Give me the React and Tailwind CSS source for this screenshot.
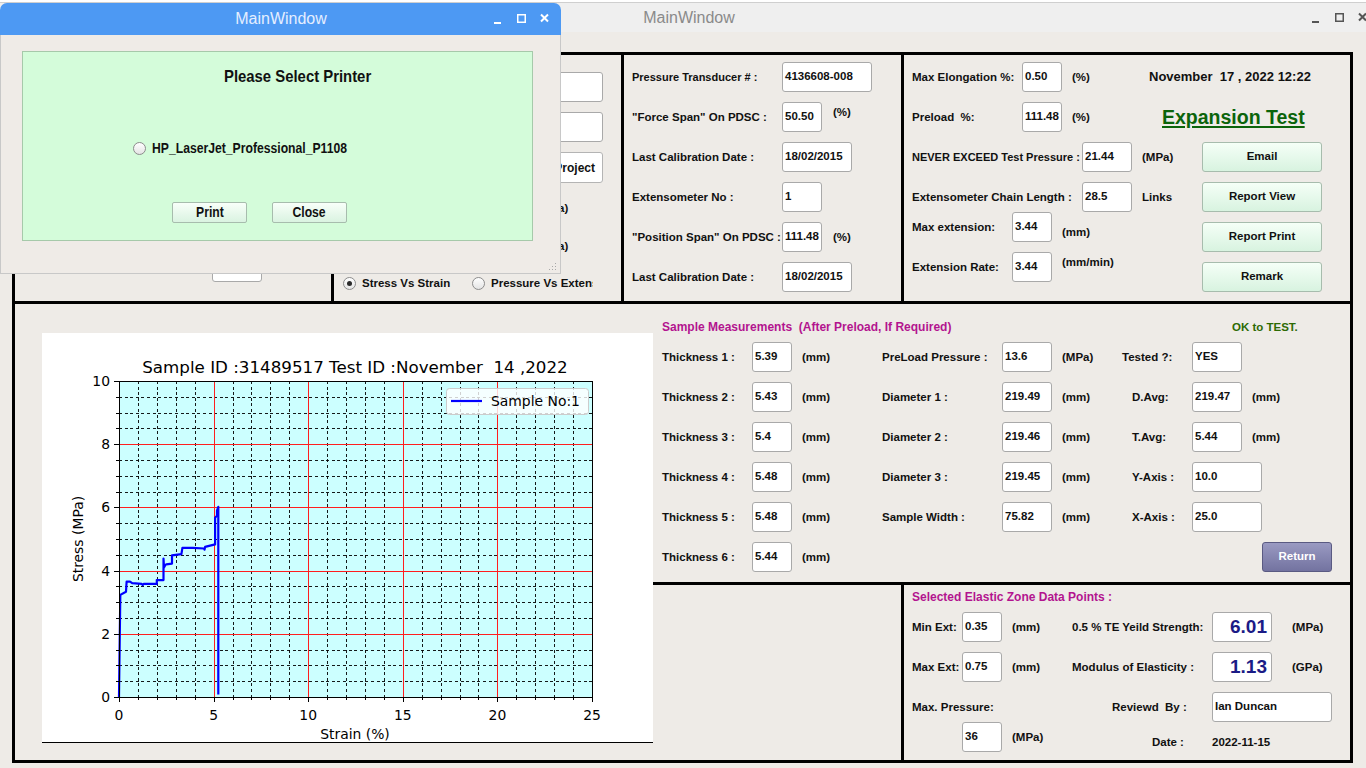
import React from "react";

const LBL = "text-[11.5px] font-bold text-[#111] whitespace-pre leading-[13px] shrink-0";

function Inp({ w, v, extra = "" }) {
  return (
    <div
      className={`h-[30px] ${w} shrink-0 bg-white border border-[#a9a9a9] rounded-[3px] flex items-center pl-[2px] text-[11.5px] font-bold text-[#111] whitespace-nowrap overflow-hidden ${extra}`}
    >
      {v}
    </div>
  );
}

function GBtn({ w, h = "h-[30px]", children }) {
  return (
    <div
      className={`${w} ${h} shrink-0 flex items-center justify-center rounded-[3px] border border-[#a7bcad] bg-linear-to-b from-[#f5fff7] to-[#d8f3e0] text-[11.5px] font-bold text-[#111]`}
    >
      {children}
    </div>
  );
}

function Radio({ checked }) {
  return (
    <span className="w-[13px] h-[13px] rounded-full border border-[#8c8c8c] bg-linear-to-b from-[#ffffff] to-[#e4e4e4] flex items-center justify-center shrink-0">
      {checked && <span className="w-[5px] h-[5px] rounded-full bg-[#2a2a2a]" />}
    </span>
  );
}

function WinCtl({ color }) {
  return (
    <svg width="58" height="12" viewBox="0 0 58 12" className="block">
      <rect x="0" y="9" width="7" height="2" fill={color} />
      <rect x="23.75" y="1.75" width="7.5" height="7.5" fill="none" stroke={color} strokeWidth="1.5" />
      <path d="M47 1.5 L54 8.5 M54 1.5 L47 8.5" stroke={color} strokeWidth="2" />
    </svg>
  );
}

function Chart() {
  const X0 = 77, X1 = 550, Y0 = 48, Y1 = 364;
  const sx = (X1 - X0) / 25;
  const sy = (Y1 - Y0) / 10;
  const px = (d) => X0 + d * sx;
  const py = (d) => Y1 - d * sy;
  const c = (v) => Math.round(v) + 0.5;
  const minorX = [], majorX = [];
  for (let i = 1; i < 25; i++) (i % 5 === 0 ? majorX : minorX).push(c(px(i)));
  const minorY = [], majorY = [];
  for (let j = 1; j < 20; j++) {
    const v = j * 0.5;
    (v % 2 === 0 ? majorY : minorY).push(c(py(v)));
  }
  const data = [
    [0, 0], [0.07, 3.23], [0.37, 3.33], [0.4, 3.65], [0.58, 3.65], [0.7, 3.6],
    [1.2, 3.58], [1.25, 3.54], [1.3, 3.58], [2.0, 3.58], [2.0, 3.7], [2.35, 3.7],
    [2.35, 4.38], [2.38, 4.1], [2.45, 4.18], [2.5, 4.2], [2.8, 4.22], [2.8, 4.48],
    [3.0, 4.5], [3.3, 4.52], [3.35, 4.72], [3.9, 4.72], [4.5, 4.7], [4.52, 4.66],
    [4.55, 4.75], [5.08, 4.83], [5.08, 5.67], [5.18, 5.74], [5.18, 5.9], [5.25, 6.02],
    [5.25, 0.08],
  ];
  const pts = data.map(([a, b]) => `${px(a).toFixed(1)},${py(b).toFixed(1)}`).join(" ");
  const ticksX = [];
  for (let i = 0; i <= 25; i++) ticksX.push(i);
  const ticksY = [];
  for (let j = 0; j <= 20; j++) ticksY.push(j * 0.5);
  const font = "DejaVu Sans, sans-serif";
  return (
    <svg width="611" height="409" viewBox="0 0 611 409" className="block">
      <text x="313" y="40" textAnchor="middle" fontSize="16.7" fontFamily={font} fill="#000" xmlSpace="preserve" className="whitespace-pre">
        Sample ID :31489517 Test ID :November  14 ,2022
      </text>
      <rect x={X0} y={Y0} width={X1 - X0} height={Y1 - Y0} fill="#ccffff" />
      <g shapeRendering="crispEdges">
        {minorX.map((x) => (
          <line key={"mx" + x} x1={x} x2={x} y1={Y0} y2={Y1} stroke="#000" strokeWidth="0.9" strokeDasharray="3 2.6" />
        ))}
        {minorY.map((y) => (
          <line key={"my" + y} x1={X0} x2={X1} y1={y} y2={y} stroke="#000" strokeWidth="0.9" strokeDasharray="3 2.6" />
        ))}
        {majorX.map((x) => (
          <line key={"Mx" + x} x1={x} x2={x} y1={Y0} y2={Y1} stroke="#ff1e1e" strokeWidth="1" />
        ))}
        {majorY.map((y) => (
          <line key={"My" + y} x1={X0} x2={X1} y1={y} y2={y} stroke="#ff1e1e" strokeWidth="1" />
        ))}
      </g>
      <polyline points={pts} fill="none" stroke="#0000ff" strokeWidth="2.2" strokeLinejoin="round" />
      <g shapeRendering="crispEdges">
        <rect x={X0 + 0.5} y={Y0 + 0.5} width={X1 - X0} height={Y1 - Y0} fill="none" stroke="#000" strokeWidth="1" />
        {ticksX.map((i) => (
          <line key={"tx" + i} x1={c(px(i))} x2={c(px(i))} y1={Y1} y2={Y1 + (i % 5 === 0 ? 5 : 3)} stroke="#000" strokeWidth="1" />
        ))}
        {ticksY.map((v) => (
          <line key={"ty" + v} x1={X0 - (v % 2 === 0 ? 5 : 3)} x2={X0} y1={c(py(v))} y2={c(py(v))} stroke="#000" strokeWidth="1" />
        ))}
      </g>
      {[0, 5, 10, 15, 20, 25].map((i) => (
        <text key={"lx" + i} x={px(i)} y="387" textAnchor="middle" fontSize="13.9" fontFamily={font} fill="#000">
          {i}
        </text>
      ))}
      {[0, 2, 4, 6, 8, 10].map((v) => (
        <text key={"ly" + v} x="68" y={py(v) + 5} textAnchor="end" fontSize="13.9" fontFamily={font} fill="#000">
          {v}
        </text>
      ))}
      <text x="313" y="406" textAnchor="middle" fontSize="13.9" fontFamily={font} fill="#000">
        Strain (%)
      </text>
      <text x="41" y="206" textAnchor="middle" fontSize="13.9" fontFamily={font} fill="#000" transform="rotate(-90 41 206)">
        Stress (MPa)
      </text>
      <rect x="404.5" y="55.5" width="142" height="26" rx="3" fill="#ffffff" fillOpacity="0.8" stroke="#cccccc" />
      <line x1="409" x2="440" y1="68" y2="68" stroke="#0000ff" strokeWidth="2.2" />
      <text x="449" y="73" fontSize="13.9" fontFamily={font} fill="#000">
        Sample No:1
      </text>
    </svg>
  );
}

function Panel1() {
  return (
    <div className="w-[319px] shrink-0 border-r-[3px] border-black flex flex-col pl-[10px]">
      <div className="mt-[7px] h-[30px] flex items-center">
        <div className="w-[100px] shrink-0" />
        <Inp w="w-[190px]" v="" />
      </div>
      <div className="mt-[10px] h-[30px] flex items-center">
        <div className="w-[100px] shrink-0" />
        <Inp w="w-[190px]" v="" />
      </div>
      <div className="mt-[10px] h-[30px] flex items-center">
        <div className="w-[100px] shrink-0" />
        <Inp w="w-[190px]" v="" />
      </div>
      <div className="mt-[10px] h-[30px] flex items-center">
        <div className="w-[100px] shrink-0" />
        <Inp w="w-[190px]" v="" />
      </div>
      <div className="mt-[40px] h-[30px] flex items-center">
        <div className="w-[187px] shrink-0" />
        <Inp w="w-[50px]" v="" />
      </div>
    </div>
  );
}

function Panel2() {
  return (
    <div className="w-[290px] shrink-0 border-r-[3px] border-black flex flex-col">
      <div className="mt-[17px] h-[30px] flex items-center pl-[10px]">
        <div className="w-[104px] shrink-0" />
        <Inp w="w-[155px]" v="" />
      </div>
      <div className="mt-[10px] h-[30px] flex items-center pl-[10px]">
        <div className="w-[104px] shrink-0" />
        <Inp w="w-[155px]" v="" />
      </div>
      <div className="mt-[10px] h-[31px] flex justify-end pr-[18px]">
        <div className="w-[94px] h-[31px] shrink-0 flex items-center justify-end pr-[7px] rounded-[3px] border border-[#b4b4b4] bg-white text-[12px] font-bold text-[#111] whitespace-nowrap">
          Select Project
        </div>
      </div>
      <div className="mt-[10px] h-[30px] flex items-center pl-[10px]">
        <div className="w-[121px] shrink-0" />
        <Inp w="w-[60px]" v="" />
        <div className={`${LBL} ml-[12px]`}>(MPa)</div>
      </div>
      <div className="mt-[8px] h-[30px] flex items-center pl-[10px]">
        <div className="w-[121px] shrink-0" />
        <Inp w="w-[60px]" v="" />
        <div className={`${LBL} ml-[12px]`}>(MPa)</div>
      </div>
      <div className="mt-[14px] h-[16px] flex items-center pl-[9px]">
        <div className="w-[129px] flex items-center gap-[6px] shrink-0">
          <Radio checked />
          <span className={LBL}>Stress Vs Strain</span>
        </div>
        <div className="w-[121px] flex items-center gap-[6px] overflow-hidden shrink-0">
          <Radio />
          <span className={LBL}>Pressure Vs Extension</span>
        </div>
      </div>
    </div>
  );
}

function Panel3() {
  return (
    <div className="w-[280px] shrink-0 border-r-[3px] border-black flex flex-col pl-[8px] pt-[7px]">
      <div className="h-[30px] flex items-center">
        <div className={`${LBL} w-[150px] text-[11px]`}>Pressure Transducer # :</div>
        <Inp w="w-[90px]" v="4136608-008" />
      </div>
      <div className="mt-[10px] h-[30px] flex items-center">
        <div className={`${LBL} w-[150px]`}>"Force Span" On PDSC :</div>
        <Inp w="w-[40px]" v="50.50" />
        <div className={`${LBL} ml-[11px] self-start mt-[4px]`}>(%)</div>
      </div>
      <div className="mt-[10px] h-[30px] flex items-center">
        <div className={`${LBL} w-[150px]`}>Last Calibration Date :</div>
        <Inp w="w-[70px]" v="18/02/2015" />
      </div>
      <div className="mt-[10px] h-[30px] flex items-center">
        <div className={`${LBL} w-[150px]`}>Extensometer No :</div>
        <Inp w="w-[40px]" v="1" />
      </div>
      <div className="mt-[10px] h-[30px] flex items-center">
        <div className={`${LBL} w-[150px]`}>"Position Span" On PDSC :</div>
        <Inp w="w-[40px]" v="111.48" />
        <div className={`${LBL} ml-[11px]`}>(%)</div>
      </div>
      <div className="mt-[10px] h-[30px] flex items-center">
        <div className={`${LBL} w-[150px]`}>Last Calibration Date :</div>
        <Inp w="w-[70px]" v="18/02/2015" />
      </div>
    </div>
  );
}

function Panel4() {
  return (
    <div className="flex-1 flex flex-col pl-[8px] pt-[7px]">
      <div className="h-[30px] flex items-center">
        <div className={`${LBL} w-[110px]`}>Max Elongation %:</div>
        <Inp w="w-[40px]" v="0.50" />
        <div className={`${LBL} ml-[10px] w-[77px]`}>(%)</div>
        <div className="text-[13px] font-bold whitespace-pre text-[#111]">November  17 , 2022 12:22</div>
      </div>
      <div className="mt-[10px] h-[30px] flex items-center">
        <div className={`${LBL} w-[110px]`}>Preload  %:</div>
        <Inp w="w-[40px]" v="111.48" />
        <div className={`${LBL} ml-[10px] w-[90px]`}>(%)</div>
        <div className="text-[19.5px] leading-[22px] font-bold text-[#0b640b] underline decoration-2 underline-offset-[2px] whitespace-nowrap">
          Expansion Test
        </div>
      </div>
      <div className="mt-[10px] flex">
        <div className="w-[290px] shrink-0 flex flex-col">
          <div className="h-[30px] flex items-center">
            <div className={`${LBL} w-[170px] text-[11px]`}>NEVER EXCEED Test Pressure :</div>
            <Inp w="w-[50px]" v="21.44" />
            <div className={`${LBL} ml-[10px]`}>(MPa)</div>
          </div>
          <div className="mt-[10px] h-[30px] flex items-center">
            <div className={`${LBL} w-[170px]`}>Extensometer Chain Length :</div>
            <Inp w="w-[50px]" v="28.5" />
            <div className={`${LBL} ml-[10px]`}>Links</div>
          </div>
          <div className="h-[30px] flex items-center">
            <div className={`${LBL} w-[100px]`}>Max extension:</div>
            <Inp w="w-[40px]" v="3.44" />
            <div className={`${LBL} ml-[10px] self-start mt-[14px]`}>(mm)</div>
          </div>
          <div className="mt-[10px] h-[30px] flex items-center">
            <div className={`${LBL} w-[100px]`}>Extension Rate:</div>
            <Inp w="w-[40px]" v="3.44" />
            <div className={`${LBL} ml-[10px] self-start mt-[4px]`}>(mm/min)</div>
          </div>
        </div>
        <div className="flex flex-col gap-[10px]">
          <GBtn w="w-[120px]">Email</GBtn>
          <GBtn w="w-[120px]">Report View</GBtn>
          <GBtn w="w-[120px]">Report Print</GBtn>
          <GBtn w="w-[120px]">Remark</GBtn>
        </div>
      </div>
    </div>
  );
}

const MROWS = [
  { t: "Thickness 1 :", tv: "5.39", l2: "PreLoad Pressure :", v2: "13.6", u2: "(MPa)", l3: "Tested ?:", v3: "YES", u3: "", first: true, wide: false },
  { t: "Thickness 2 :", tv: "5.43", l2: "Diameter 1 :", v2: "219.49", u2: "(mm)", l3: "D.Avg:", v3: "219.47", u3: "(mm)", first: false, wide: false },
  { t: "Thickness 3 :", tv: "5.4", l2: "Diameter 2 :", v2: "219.46", u2: "(mm)", l3: "T.Avg:", v3: "5.44", u3: "(mm)", first: false, wide: false },
  { t: "Thickness 4 :", tv: "5.48", l2: "Diameter 3 :", v2: "219.45", u2: "(mm)", l3: "Y-Axis :", v3: "10.0", u3: "", first: false, wide: true },
  { t: "Thickness 5 :", tv: "5.48", l2: "Sample Width :", v2: "75.82", u2: "(mm)", l3: "X-Axis :", v3: "25.0", u3: "", first: false, wide: true },
];

function Measure() {
  return (
    <div className="h-[281px] shrink-0 border-b-[3px] border-black flex flex-col pl-[9px]">
      <div className="mt-[16px] h-[14px] flex items-center">
        <div className="w-[570px] shrink-0 text-[12px] leading-[14px] font-bold text-[#b3148f] whitespace-pre">
          Sample Measurements  (After Preload, If Required)
        </div>
        <div className="text-[11.5px] leading-[14px] font-bold text-[#2d6a04] whitespace-pre">OK to TEST.</div>
      </div>
      <div className="mt-[8px] flex flex-col gap-[10px]">
        {MROWS.map((r) => (
          <div key={r.t} className="h-[30px] flex items-center">
            <div className={`${LBL} w-[90px]`}>{r.t}</div>
            <Inp w="w-[40px]" v={r.tv} />
            <div className={`${LBL} ml-[10px] w-[80px]`}>(mm)</div>
            <div className={`${LBL} w-[120px]`}>{r.l2}</div>
            <Inp w="w-[50px]" v={r.v2} />
            <div className={`${LBL} ml-[10px] w-[60px]`}>{r.u2}</div>
            <div className={`${LBL} ${r.first ? "w-[70px]" : "w-[60px] ml-[10px]"}`}>{r.l3}</div>
            <Inp w={r.wide ? "w-[70px]" : "w-[50px]"} v={r.v3} />
            {r.u3 && <div className={`${LBL} ml-[10px]`}>{r.u3}</div>}
          </div>
        ))}
        <div className="h-[30px] flex items-center">
          <div className={`${LBL} w-[90px]`}>Thickness 6 :</div>
          <Inp w="w-[40px]" v="5.44" />
          <div className={`${LBL} ml-[10px] w-[80px]`}>(mm)</div>
          <div className="flex-1" />
          <div className="w-[70px] h-[30px] mr-[18px] rounded-[3px] border border-[#5a5a82] bg-linear-to-b from-[#9a9ac2] to-[#7373a0] flex items-center justify-center text-[11.5px] font-bold text-white">
            Return
          </div>
        </div>
      </div>
    </div>
  );
}

function Elastic() {
  return (
    <div className="flex-1 flex flex-col pl-[8px]">
      <div className="mt-[5px] h-[14px] text-[12px] leading-[14px] font-bold text-[#b3148f] whitespace-pre">
        Selected Elastic Zone Data Points :
      </div>
      <div className="mt-[8px] h-[30px] flex items-center">
        <div className={`${LBL} w-[50px]`}>Min Ext:</div>
        <Inp w="w-[40px]" v="0.35" />
        <div className={`${LBL} ml-[10px] w-[60px]`}>(mm)</div>
        <div className={`${LBL} w-[140px]`}>0.5 % TE Yeild Strength:</div>
        <div className="w-[60px] h-[30px] shrink-0 bg-white border border-[#a9a9a9] rounded-[3px] flex items-center justify-end pr-[4px] text-[19px] font-bold text-[#1b1b86]">
          6.01
        </div>
        <div className={`${LBL} ml-[20px]`}>(MPa)</div>
      </div>
      <div className="mt-[10px] h-[30px] flex items-center">
        <div className={`${LBL} w-[50px]`}>Max Ext:</div>
        <Inp w="w-[40px]" v="0.75" />
        <div className={`${LBL} ml-[10px] w-[60px]`}>(mm)</div>
        <div className={`${LBL} w-[140px]`}>Modulus of Elasticity :</div>
        <div className="w-[60px] h-[30px] shrink-0 bg-white border border-[#a9a9a9] rounded-[3px] flex items-center justify-end pr-[4px] text-[19px] font-bold text-[#1b1b86]">
          1.13
        </div>
        <div className={`${LBL} ml-[20px]`}>(GPa)</div>
      </div>
      <div className="mt-[10px] h-[30px] flex items-center">
        <div className={`${LBL} w-[200px]`}>Max. Pressure:</div>
        <div className={`${LBL} w-[100px]`}>Reviewd  By :</div>
        <Inp w="w-[120px]" v="Ian Duncan" />
      </div>
      <div className="h-[30px] flex items-center">
        <div className="w-[50px] shrink-0" />
        <Inp w="w-[40px]" v="36" />
        <div className={`${LBL} ml-[10px] w-[140px]`}>(MPa)</div>
        <div className={`${LBL} w-[60px] self-start mt-[14px]`}>Date :</div>
        <div className={`${LBL} self-start mt-[14px]`}>2022-11-15</div>
      </div>
    </div>
  );
}

function Dialog() {
  return (
    <div className="absolute left-0 top-[3px] w-[561px] flex flex-col">
      <div className="h-[32px] rounded-t-[7px] bg-[#4d99f3] flex items-center">
        <div className="flex-1 flex justify-center pl-[68px] text-[16px] text-[#e4eeff]">MainWindow</div>
        <div className="w-[55px] mr-[12px] shrink-0">
          <WinCtl color="#ffffff" />
        </div>
      </div>
      <div className="h-[239px] bg-[#efebe7] border border-t-0 border-[#c8c8c8] flex flex-col">
        <div className="mt-[16px] ml-[21px] w-[511px] h-[190px] bg-[#d4fcda] border border-[#a6c9aa] flex flex-col">
          <div className="mt-[15px] pl-[201px] h-[20px] flex items-center">
            <span className="inline-block origin-left scale-x-[0.875] text-[17px] leading-[20px] font-bold text-[#111] whitespace-nowrap">
              Please Select Printer
            </span>
          </div>
          <div className="mt-[53px] h-[16px] ml-[110px] flex items-center gap-[6px]">
            <Radio />
            <span className="inline-block origin-left scale-x-[0.87] text-[14px] font-bold text-[#111] whitespace-nowrap">
              HP_LaserJet_Professional_P1108
            </span>
          </div>
          <div className="mt-[46px] ml-[149px] flex gap-[25px]">
            <div className="w-[75px] h-[21px] rounded-[2px] border border-[#a7bcad] bg-linear-to-b from-[#f8fff9] to-[#daf3e1] flex items-center justify-center">
              <span className="inline-block scale-x-[0.87] text-[14px] font-bold text-[#111]">Print</span>
            </div>
            <div className="w-[75px] h-[21px] rounded-[2px] border border-[#a7bcad] bg-linear-to-b from-[#f8fff9] to-[#daf3e1] flex items-center justify-center">
              <span className="inline-block scale-x-[0.87] text-[14px] font-bold text-[#111]">Close</span>
            </div>
          </div>
        </div>
        <div className="mt-auto self-end mr-[3px] mb-[2px]">
          <svg width="9" height="9" viewBox="0 0 9 9" className="block">
            {[
              [7, 1], [7, 4], [4, 4], [7, 7], [4, 7], [1, 7],
            ].map(([x, y]) => (
              <rect key={x + "-" + y} x={x} y={y} width="1" height="1" fill="#a8a8a8" />
            ))}
          </svg>
        </div>
      </div>
    </div>
  );
}

export default function App() {
  return (
    <div className="relative w-[1366px] h-[768px] overflow-hidden bg-[#eeebe7] font-['Liberation_Sans',Arial,sans-serif] text-[#111]">
      <div className="h-[2px] bg-white" />
      <div className="h-[30px] bg-[#efefef] border-t border-[#cfcfcf] flex items-center">
        <div className="flex-1 flex justify-center pl-[66px] text-[16px] text-[#8a8a8a]">MainWindow</div>
        <div className="w-[54px] shrink-0">
          <WinCtl color="#555555" />
        </div>
      </div>
      <div className="ml-[12px] mt-[20px] w-[1341px] h-[711px] border-[3px] border-black flex flex-col">
        <div className="h-[249px] shrink-0 border-b-[3px] border-black flex">
          <Panel1 />
          <Panel2 />
          <Panel3 />
          <Panel4 />
        </div>
        <div className="flex-1 flex">
          <div className="w-[638px] shrink-0">
            <div className="ml-[27px] mt-[29px] w-[611px] h-[410px] bg-white border-b border-black">
              <Chart />
            </div>
          </div>
          <div className="flex-1 flex flex-col">
            <Measure />
            <div className="flex-1 flex">
              <div className="w-[251px] shrink-0 border-r-[3px] border-black" />
              <Elastic />
            </div>
          </div>
        </div>
      </div>
      <Dialog />
    </div>
  );
}
